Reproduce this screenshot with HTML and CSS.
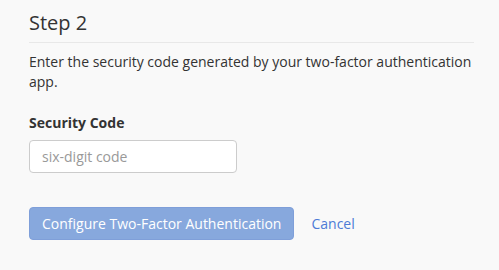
FILE: index.html
```html
<!DOCTYPE html>
<html>
<head>
<meta charset="utf-8">
<link rel="stylesheet" href="styles.css">
</head>
<body>
<div class="panel">
  <h2 class="title">Step 2</h2>
  <p class="desc">Enter the security code generated by your two-factor authentication app.</p>
  <label class="label" for="code">Security Code</label>
  <input class="input" id="code" type="text" placeholder="six-digit code">
  <div class="actions">
    <button class="btn" type="button">Configure Two-Factor Authentication</button>
    <a class="cancel" href="#">Cancel</a>
  </div>
</div>
</body>
</html>
```
FILE: styles.css
```css
html, body {
  margin: 0;
  padding: 0;
  background: #f9f9f9;
}
body {
  font-family: "Open Sans", sans-serif;
  color: #333;
}
.panel {
  padding: 9px 25px 0 29px;
}
.title {
  margin: 0;
  font-size: 20px;
  font-weight: 400;
  line-height: 28px;
  padding-bottom: 5px;
  border-bottom: 1px solid #e8e8e8;
}
.desc {
  margin: 9px 0 0;
  font-size: 14px;
  line-height: 20px;
}
.label {
  display: block;
  margin-top: 21px;
  font-size: 14px;
  font-weight: 700;
  line-height: 20px;
}
.input {
  display: block;
  margin-top: 7px;
  box-sizing: border-box;
  width: 208px;
  height: 33px;
  padding: 0 12px;
  border: 1px solid #ccc;
  border-radius: 4px;
  background: #fff;
  font-family: "Open Sans", sans-serif;
  font-size: 14px;
  color: #333;
}
.input::placeholder {
  color: #999;
}
.actions {
  display: flex;
  align-items: center;
  gap: 17px;
  margin-top: 34px;
}
.btn {
  box-sizing: border-box;
  height: 33px;
  padding: 0 12px;
  white-space: nowrap;
  border: 1px solid #7f9fd9;
  border-radius: 4px;
  background: #87a8dd;
  color: #fff;
  font-family: "Open Sans", sans-serif;
  font-size: 14px;
}
.cancel {
  color: #4d7bd6;
  text-decoration: none;
  font-size: 14px;
}
```
